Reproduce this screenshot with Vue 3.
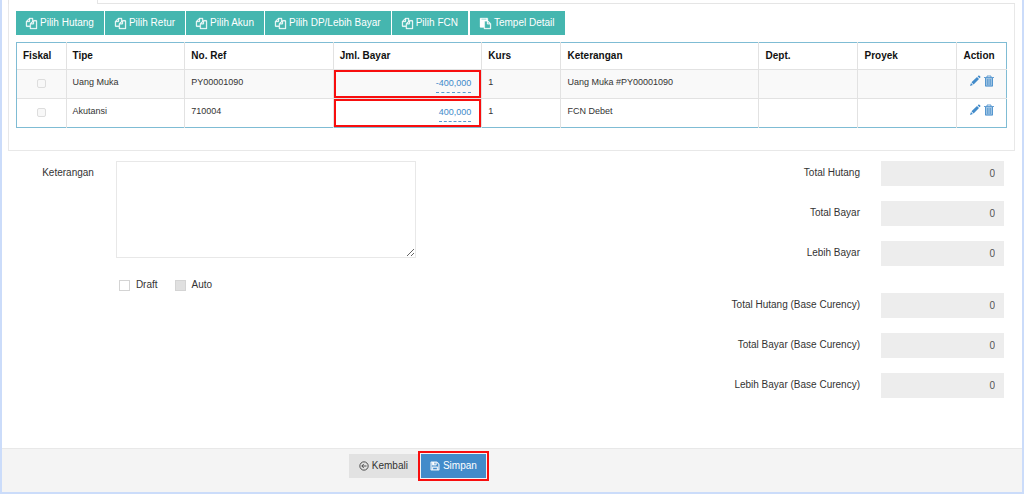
<script setup>
import { ref } from 'vue'

const copyIcon = 'M1696 384q40 0 68 28t28 68v1216q0 40-28 68t-68 28h-960q-40 0-68-28t-28-68v-288h-544q-40 0-68-28t-28-68v-672q0-40 20-88t48-76l408-408q28-28 76-48t88-20h416q40 0 68 28t28 68v328q68-40 128-40h416zm-544 213l-299 299h299v-299zm-640-384l-299 299h299v-299zm196 647l316-316v-416h-384v416q0 40-28 68t-68 28h-416v640h512v-256q0-40 20-88t48-76zm956 804v-1152h-384v416q0 40-28 68t-68 28h-416v640h896z'
const pasteIcon = 'M768 1664h896v-640h-416q-40 0-68-28t-28-68v-416h-384v1152zm256-1440v-64q0-13-9.5-22.5t-22.5-9.5h-704q-13 0-22.5 9.5t-9.5 22.5v64q0 13 9.5 22.5t22.5 9.5h704q13 0 22.5-9.5t9.5-22.5zm256 672h299l-299-299v299zm512 128v672q0 40-28 68t-68 28h-960q-40 0-68-28t-28-68v-160h-544q-40 0-68-28t-28-68v-1344q0-40 28-68t68-28h1088q40 0 68 28t28 68v328q21 13 36 28l408 408q28 28 48 76t20 88z'

const pickers = ['Pilih Hutang', 'Pilih Retur', 'Pilih Akun', 'Pilih DP/Lebih Bayar', 'Pilih FCN']

const rows = [
  { tipe: 'Uang Muka', noRef: 'PY00001090', bayar: '-400,000', kurs: '1', ket: 'Uang Muka #PY00001090' },
  { tipe: 'Akutansi', noRef: '710004', bayar: '400,000', kurs: '1', ket: 'FCN Debet' },
]

const totals = [
  ['Total Hutang', 'Total Bayar', 'Lebih Bayar'],
  ['Total Hutang (Base Curency)', 'Total Bayar (Base Curency)', 'Lebih Bayar (Base Curency)'],
]

const keterangan = ref('')
const draft = ref(false)
</script>

<template>
  <form class="page" @submit.prevent>
    <div class="tabs"><span class="tab"></span><span class="tab-rest"></span></div>

    <section class="panel">
      <div class="toolbar">
        <div class="group">
          <button v-for="p in pickers" :key="p" type="button" class="tool">
            <svg viewBox="0 0 1792 1792" aria-hidden="true"><path :d="copyIcon" /></svg>{{ p }}
          </button>
        </div>
        <button type="button" class="tool">
          <svg viewBox="0 0 1792 1792" aria-hidden="true"><path :d="pasteIcon" /></svg>Tempel Detail
        </button>
      </div>

      <table class="detail">
        <colgroup>
          <col class="c-s" /><col class="c-tipe" /><col class="c-ref" /><col class="c-ref" />
          <col class="c-kurs" /><col class="c-ket" /><col class="c-m" /><col class="c-m" /><col class="c-s" />
        </colgroup>
        <thead>
          <tr>
            <th>Fiskal</th><th>Tipe</th><th>No. Ref</th><th>Jml. Bayar</th><th>Kurs</th>
            <th>Keterangan</th><th>Dept.</th><th>Proyek</th><th>Action</th>
          </tr>
        </thead>
        <tbody>
          <tr v-for="r in rows" :key="r.noRef">
            <td class="tick"><input type="checkbox" disabled :aria-label="'Fiskal ' + r.noRef" /></td>
            <td>{{ r.tipe }}</td>
            <td>{{ r.noRef }}</td>
            <td class="amount"><div class="marked"><a href="#">{{ r.bayar }}</a></div></td>
            <td>{{ r.kurs }}</td>
            <td>{{ r.ket }}</td>
            <td></td>
            <td></td>
            <td>
              <div class="actions">
                <button type="button" aria-label="Edit">
                  <svg viewBox="0 0 12 12" aria-hidden="true">
                    <path d="M1 11l1-3 1.900 1.900zM2.500 7.300L8 2l2 2-5.400 5.400zM8.700 1.400l.8-.8q.5-.3 1 .1l.8.8q.4.500 0 1l-.7.800z" />
                  </svg>
                </button>
                <button type="button" aria-label="Hapus">
                  <svg viewBox="0 0 12 12" aria-hidden="true">
                    <path opacity=".5" d="M2 3h8v8.500H2z" />
                    <path fill="none" stroke="currentColor" opacity=".8" d="M1 2.500h10M4 2.500v-1.500h4v1.500M2.500 3v8h7v-8M4.800 4v6M7.200 4v6" />
                  </svg>
                </button>
              </div>
            </td>
          </tr>
        </tbody>
      </table>
    </section>

    <div class="form">
      <label class="ket-label" for="ket">Keterangan</label>
      <div class="ket">
        <textarea id="ket" v-model="keterangan"></textarea>
        <div class="checks">
          <label><input v-model="draft" type="checkbox" />Draft</label>
          <label><input type="checkbox" disabled />Auto</label>
        </div>
      </div>
      <div class="totals">
        <div v-for="(g, gi) in totals" :key="gi" class="total-group">
          <div v-for="(t, i) in g" :key="t" class="total">
            <label :for="'total-' + gi + i">{{ t }}</label>
            <input :id="'total-' + gi + i" type="text" value="0" readonly />
          </div>
        </div>
      </div>
    </div>

    <footer class="footer">
      <button type="button" class="back">
        <svg viewBox="0 0 12 12" aria-hidden="true">
          <path fill="none" stroke="currentColor" d="M6 1a5 5 0 1 0 0 10a5 5 0 1 0 0-10M9 6H3.500M5.800 3.500L3.300 6l2.500 2.500" />
        </svg>Kembali
      </button>
      <div class="save-mark">
        <button type="submit" class="save">
          <svg viewBox="0 0 1792 1792" aria-hidden="true">
            <path d="M512 1536h768v-384h-768v384zm896 0h128v-896q0-14-10-38.500t-20-34.500l-281-281q-10-10-34-20t-39-10v416q0 40-28 68t-68 28h-576q-40 0-68-28t-28-68v-416h-128v1280h128v-416q0-40 28-68t68-28h832q40 0 68 28t28 68v416zm-384-928v-320q0-13-9.500-22.500t-22.500-9.500h-192q-13 0-22.500 9.500t-9.500 22.500v320q0 13 9.500 22.500t22.500 9.500h192q13 0 22.500-9.500t9.500-22.500zm640 32v928q0 40-28 68t-68 28h-1344q-40 0-68-28t-28-68v-1344q0-40 28-68t68-28h928q40 0 88 20t76 48l280 280q28 28 48 76t20 88z" />
          </svg>Simpan
        </button>
      </div>
    </footer>
  </form>
</template>

<style>
body {
  margin: 0;
}
</style>

<style scoped>
* {
  box-sizing: border-box;
}
.page {
  display: flex;
  flex-direction: column;
  min-height: 100vh;
  border: solid #cbdcfa;
  border-width: 0 2px 2px;
  background: #fff;
  color: #333;
  font: 10px/14px "Liberation Sans", Arial, sans-serif;
}
button,
input,
textarea {
  font: inherit;
  margin: 0;
}
button {
  border: 0;
  border-radius: 0;
  cursor: pointer;
  white-space: nowrap;
}
svg {
  display: block;
  fill: currentColor;
}
.tabs {
  display: flex;
  height: 4px;
  margin: 0 7px 0 6px;
}
.tab {
  width: 90px;
  border: solid #e5e5e5;
  border-width: 0 1px;
}
.tab-rest {
  flex: 1;
  border-bottom: 1px solid #e5e5e5;
}
.panel {
  margin: 0 7px 0 6px;
  padding: 7px 7px 22px;
  border: solid #e8e8e8;
  border-width: 0 1px 1px;
}
.toolbar {
  display: flex;
  gap: 2px;
  margin-bottom: 7px;
}
.group {
  display: flex;
  gap: 1px;
}
.tool {
  display: flex;
  align-items: center;
  gap: 3px;
  height: 24px;
  padding: 0 10px;
  background: #45b6af;
  color: #fff;
}
.tool svg {
  width: 11px;
  height: 11px;
  stroke: currentColor;
  stroke-width: 50;
  overflow: visible;
}
.detail {
  width: 100%;
  table-layout: fixed;
  border-collapse: collapse;
  border: 1px solid #7fbcd4;
}
.c-s { width: 5%; }
.c-tipe { width: 12%; }
.c-ref { width: 15%; }
.c-kurs { width: 8%; }
.c-ket { width: 20%; }
.c-m { width: 10%; }
.detail th {
  height: 27px;
  padding: 0 6px;
  border-left: 1px solid #e2e2e2;
  color: #111;
  text-align: left;
}
.detail td {
  height: 29px;
  padding: 5px 6px;
  border: solid #e2e2e2;
  border-width: 1px 0 0 1px;
  font-size: 9px;
  vertical-align: top;
}
.detail th:first-child,
.detail td:first-child {
  border-left-color: #7fbcd4;
}
.detail tbody tr:nth-child(odd) {
  background: #f9f9f9;
}
.detail td.tick {
  padding: 0 0 2px;
  text-align: center;
  vertical-align: middle;
}
input[type="checkbox"] {
  appearance: none;
  display: block;
  width: 11px;
  height: 11px;
  border: 1px solid #d4d4d4;
  background: #fff;
}
.detail input[type="checkbox"] {
  width: 9px;
  height: 9px;
  margin: 0 auto;
  border-color: #ddd;
  border-radius: 2px;
  background: #f8f8f8;
}
.detail td.amount {
  padding: 0;
}
.marked {
  height: 28px;
  padding: 2px 8px 0;
  border: 2px solid #f80e0e;
  text-align: right;
}
.marked a {
  display: inline-block;
  border-bottom: 1px dashed #5b9bd1;
  color: #428bca;
  line-height: 18px;
  text-decoration: none;
}
.actions {
  display: flex;
  justify-content: center;
  gap: 2px;
}
.actions button {
  padding: 0;
  background: none;
  color: #428bca;
}
.actions svg {
  width: 12px;
  height: 12px;
}
.form {
  display: grid;
  grid-template-columns: 92fr 300fr 567fr;
  column-gap: 22px;
  padding: 10px 18px 0 0;
}
.ket-label {
  padding-top: 5px;
  text-align: right;
}
textarea {
  display: block;
  width: 100%;
  height: 97px;
  border: 1px solid #e8e8e8;
  background: #fff;
  resize: both;
}
.checks {
  display: flex;
  gap: 17px;
  padding: 20px 3px;
}
.checks label {
  display: flex;
  align-items: center;
  gap: 6px;
}
.checks input:disabled {
  background: #e0e0e0;
}
.totals {
  display: grid;
  gap: 27px;
  align-content: start;
}
.total-group {
  display: grid;
  gap: 15px;
}
.total {
  display: grid;
  grid-template-columns: 1fr 123px;
  column-gap: 21px;
  text-align: right;
}
.total label {
  padding-top: 5px;
}
.total input {
  width: 100%;
  height: 25px;
  padding: 0 9px;
  border: 0;
  background: #ededed;
  color: #555;
  text-align: right;
}
.footer {
  display: flex;
  align-items: center;
  margin-top: auto;
  padding: 2px 0 11px 34%;
  border-top: 1px solid #e8e8e8;
  background: #f4f4f4;
}
.footer button {
  display: flex;
  align-items: center;
  gap: 3px;
  height: 24px;
  padding: 0 10px;
}
.footer svg {
  width: 10px;
  height: 10px;
}
.footer .back {
  background: #e2e2e2;
  color: #333;
}
.save-mark {
  padding: 1px;
  border: 2px solid #f80e0e;
}
.footer .save {
  padding: 0 9px;
  background: #428bca;
  color: #fff;
}
.save svg {
  stroke: currentColor;
  stroke-width: 60;
}
</style>
